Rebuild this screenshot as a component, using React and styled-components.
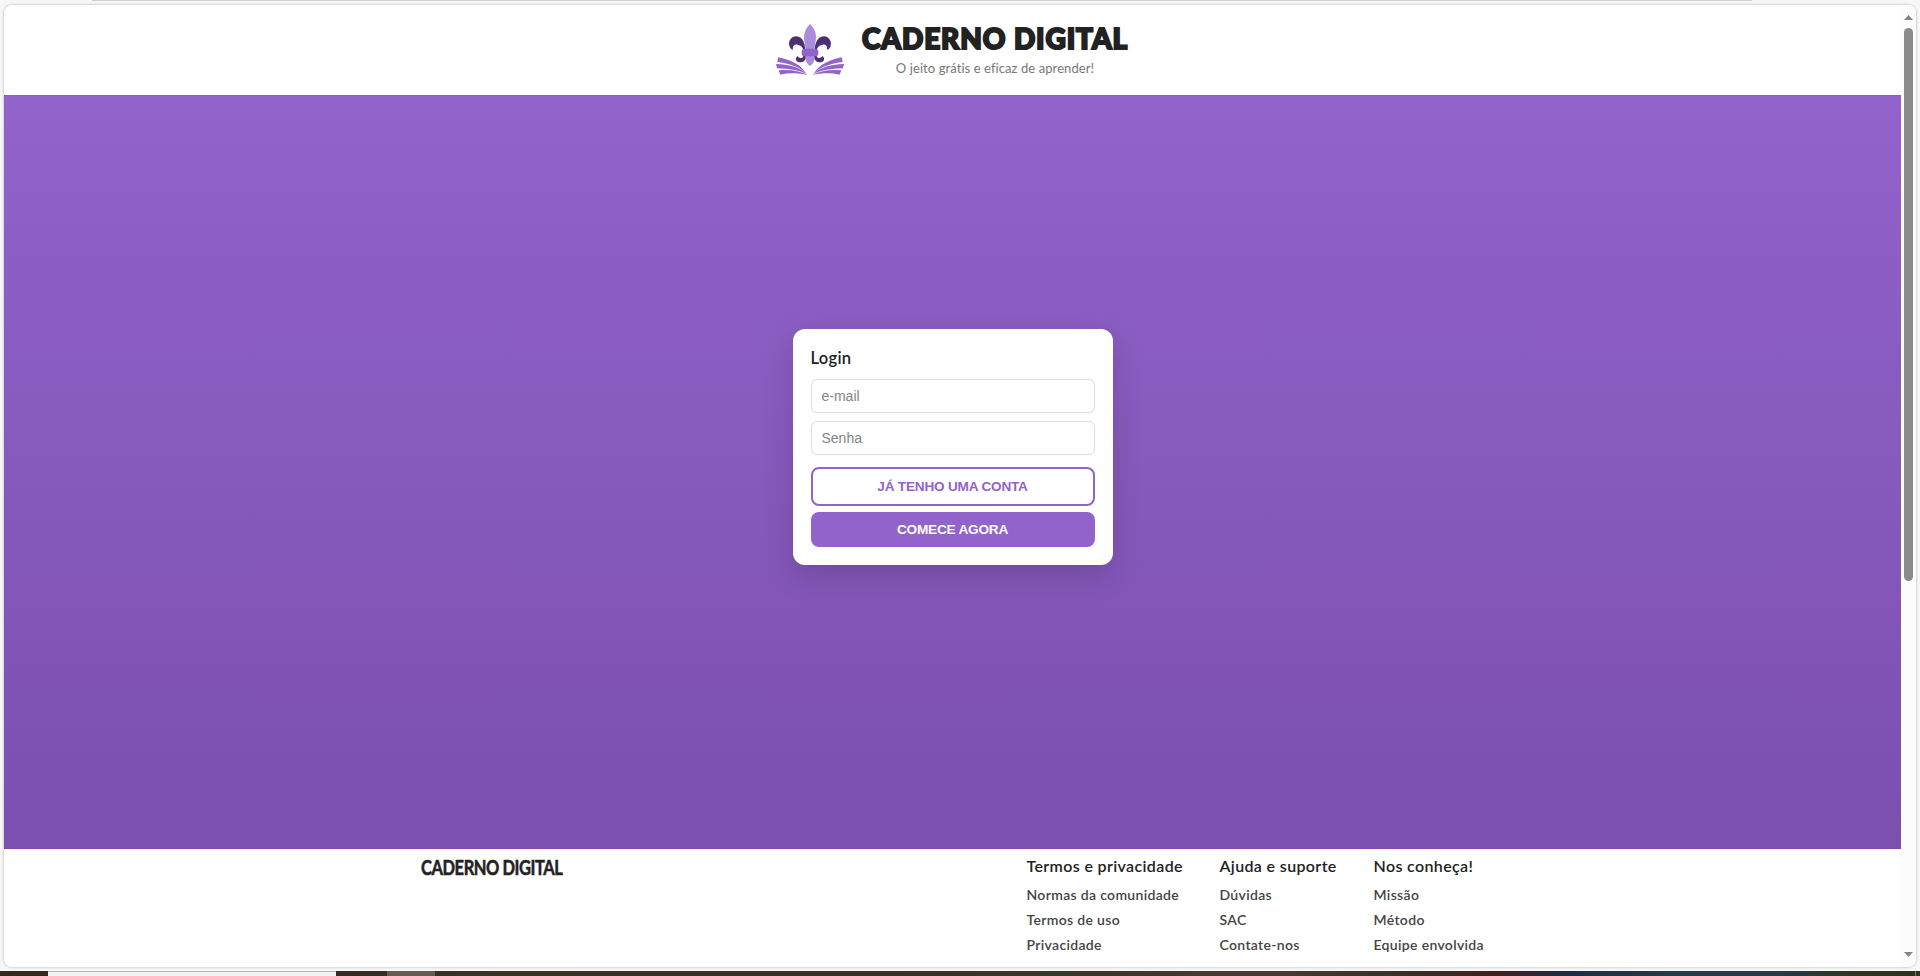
import React from "react";
import styled, { createGlobalStyle } from "styled-components";

const GlobalStyle = createGlobalStyle`
  *, *::before, *::after { box-sizing: border-box; }
  body { margin: 0; background: #f7f7f7; color: #222; font-family: Lato, "Liberation Sans", sans-serif; overflow: hidden; }
  h1, h2, h3, p, ul { margin: 0; padding: 0; }
`;

const Desktop = styled.div`
  display: flex;
  flex-direction: column;
  width: 1920px;
  height: 976px;
`;

const TopEdge = styled.div`
  flex: 0 0 5px;
  padding: 0 168px 0 92px;
  &::before { content: ""; display: block; height: 1px; background: #cfcfcf; }
`;

const Frame = styled.div`
  display: flex;
  flex: 0 0 962px;
  margin: 0 4px;
  border-radius: 8px;
  background: #fff;
  overflow: hidden;
  box-shadow: 0 0 2px 1px rgba(0, 0, 0, 0.14);
`;

const Page = styled.div`
  display: flex;
  flex-direction: column;
  flex: 1;
`;

const Header = styled.header`
  display: flex;
  justify-content: center;
  gap: 17px;
  height: 90px;
  padding: 17px 2px 0 0;
`;

const Brand = styled.div`
  display: flex;
  flex-direction: column;
  align-items: center;
  width: 266px;
`;

const Title = styled.h1`
  margin-top: -1px;
  font-size: 28px;
  font-weight: 900;
  line-height: 34px;
  white-space: nowrap;
  letter-spacing: ${(p) => p.$spacing};
  -webkit-text-stroke: 2px #222;
  stroke-linejoin: round;
`;

const Tagline = styled.p`
  margin-top: 4px;
  font-size: 13px;
  line-height: 18px;
  color: #777;
  white-space: nowrap;
  letter-spacing: ${(p) => p.$spacing};
`;

const Hero = styled.main`
  display: flex;
  align-items: center;
  justify-content: center;
  height: 754px;
  padding-bottom: 50px;
  border-top: 1px solid #8660ba;
  border-bottom: 1px solid #8a44ab;
  background: linear-gradient(180deg, #9163cb, #7b4fae);
`;

const Card = styled.form`
  display: flex;
  flex-direction: column;
  width: 320px;
  height: 236px;
  padding: 18px;
  border-radius: 12px;
  background: #fff;
  box-shadow: 0 10px 30px rgba(0, 0, 0, 0.15);
`;

const CardTitle = styled.h2`
  height: 32px;
  font-size: 16.5px;
  line-height: 22px;
  font-weight: 600;
  letter-spacing: ${(p) => p.$spacing};
`;

const Field = styled.input`
  flex: 0 0 34px;
  width: 100%;
  margin-bottom: 8px;
  padding: 0 10px;
  border: 1px solid #ddd;
  border-radius: 6px;
  background: #fff;
  font: 14px "Liberation Sans", sans-serif;
  &::placeholder { color: #858585; }
`;

const Button = styled.button`
  flex: 0 0 ${(p) => (p.$filled ? 35 : 39)}px;
  margin-top: ${(p) => (p.$filled ? 6 : 4)}px;
  padding: 0;
  border: ${(p) => (p.$filled ? "0" : "2px solid #9163cb")};
  border-radius: 8px;
  background: ${(p) => (p.$filled ? "#9163cb" : "#fff")};
  color: ${(p) => (p.$filled ? "#fff" : "#9163cb")};
  font: 700 13.6px "Liberation Sans", sans-serif;
  letter-spacing: ${(p) => p.$spacing};
`;

const Footer = styled.footer`
  display: flex;
  flex: 1;
  padding: 7px 0 0 417px;
`;

const FooterBrand = styled.div`
  width: 605.5px;
  font-size: 18.5px;
  line-height: 22px;
  font-weight: 700;
  letter-spacing: ${(p) => p.$spacing};
  -webkit-text-stroke: 0.5px #222;
  stroke-linejoin: round;
  transform: scale(0.892, 1.08);
  transform-origin: left top;
`;

const LinkGroup = styled.section`
  width: ${(p) => p.$width}px;
  white-space: nowrap;
`;

const GroupTitle = styled.h3`
  font-size: 16px;
  line-height: 20px;
  font-weight: 600;
  letter-spacing: ${(p) => p.$spacing};
`;

const Links = styled.ul`
  display: grid;
  grid-auto-rows: 25px;
  margin-top: 6px;
  list-style: none;
`;

const FooterLink = styled.li`
  color: #444;
  font-size: 14px;
  line-height: 25px;
  font-weight: 600;
  letter-spacing: ${(p) => p.$spacing};
`;

const Scrollbar = styled.div`
  display: flex;
  flex-direction: column;
  align-items: center;
  flex: 0 0 15px;
  padding: 10px 0;
  background: #fcfcfc;
`;

const Thumb = styled.div`
  width: 9px;
  height: 553px;
  margin: 8px 0 auto;
  border-radius: 5px;
  background: #8b8b8b;
`;

const Arrow = styled.svg`
  display: block;
  width: 9px;
  height: 5px;
  fill: #858585;
  transform: ${(p) => (p.$down ? "rotate(180deg)" : "none")};
`;

const Taskbar = styled.div`
  display: flex;
  flex: 0 0 5px;
  margin-top: 4px;
  background: linear-gradient(90deg, #35291f 0, #35291f 48px, #332b22 340px, #383426 500px, #383529 1070px, #4b3a34 1260px, #383429 1380px, #421f20 1500px, #1e2b42 1565px, #263c4a 1680px, #273940 1790px, #343221 1860px, #302f20 1920px);
`;

const TaskItem = styled.div`
  width: ${(p) => p.$width}px;
  margin-left: ${(p) => p.$gap}px;
  background: ${(p) => p.$color};
  border-top: ${(p) => (p.$outlined ? "1px solid #b8b8b8" : "0")};
`;

function LogoMark() {
  return (
    <svg width="70" height="55" viewBox="45 36 210 165" aria-hidden="true">
      <g fill="#4d2f73">
        <path d="M136 121C135 99 128 80 109 79C91 79 83 98 89 110C92 117 97 119 99 119C97 107 104 103 112 104C123 105 129 113 130 121Z" />
        <path d="M164 121C165 99 172 80 191 79C209 79 217 98 211 110C208 117 203 119 201 119C203 107 196 103 188 104C177 105 171 113 170 121Z" />
        <path d="M130 135C131 145 121 148 112 138C103 148 109 158 122 157C132 156 138 148 139 137Z" />
        <path d="M170 135C169 145 179 148 188 138C197 148 191 158 178 157C168 156 162 148 161 137Z" />
      </g>
      <path fill="#aa8bdc" d="M150 42C138 54 132 67 132 80C132 96 137 105 136 119V138C136 152 140 162 150 168C160 162 164 152 164 138V119C163 105 168 96 168 80C168 67 162 54 150 42Z" />
      <rect x="125" y="116" width="50" height="23" rx="9" fill="#9163cb" />
      <g fill="#9163cb">
        <path d="M55 142C90 149 121 163 137 188C114 169 84 160 52 156Z" />
        <path d="M48 162C86 163 119 171 142 193C115 180 87 176 51 175Z" />
        <path d="M56 181C88 178 117 181 143 195C113 189 88 188 61 194Z" />
        <path d="M245 142C210 149 179 163 163 188C186 169 216 160 248 156Z" />
        <path d="M252 162C214 163 181 171 158 193C185 180 213 176 249 175Z" />
        <path d="M244 181C212 178 183 181 157 195C187 189 212 188 239 194Z" />
      </g>
    </svg>
  );
}

const groups = [
  { title: "Termos e privacidade", width: 193, links: ["Normas da comunidade", "Termos de uso", "Privacidade"] },
  { title: "Ajuda e suporte", width: 154, links: ["Dúvidas", "SAC", "Contate-nos"] },
  { title: "Nos conheça!", width: 130, links: ["Missão", "Método", "Equipe envolvida"] },
];

export default function App() {
  return (
    <Desktop>
      <GlobalStyle />
      <TopEdge />
      <Frame>
        <Page>
          <Header>
            <LogoMark />
            <Brand>
              <Title $spacing="0.9px">CADERNO DIGITAL</Title>
              <Tagline $spacing="0.08px">O jeito grátis e eficaz de aprender!</Tagline>
            </Brand>
          </Header>
          <Hero>
            <Card>
              <CardTitle $spacing="0.3px">Login</CardTitle>
              <Field placeholder="e-mail" type="email" />
              <Field placeholder="Senha" type="password" />
              <Button type="button" $spacing="-0.2px">JÁ TENHO UMA CONTA</Button>
              <Button type="button" $filled $spacing="-0.2px">COMECE AGORA</Button>
            </Card>
          </Hero>
          <Footer>
            <FooterBrand $spacing="-0.5px">CADERNO DIGITAL</FooterBrand>
            {groups.map((g) => (
              <LinkGroup key={g.title} $width={g.width}>
                <GroupTitle $spacing="0.36px">{g.title}</GroupTitle>
                <Links>
                  {g.links.map((l) => (
                    <FooterLink key={l} $spacing="0.33px">{l}</FooterLink>
                  ))}
                </Links>
              </LinkGroup>
            ))}
          </Footer>
        </Page>
        <Scrollbar>
          <Arrow viewBox="0 0 9 5"><path d="M4.5 0L9 5H0Z" /></Arrow>
          <Thumb />
          <Arrow $down viewBox="0 0 9 5"><path d="M4.5 0L9 5H0Z" /></Arrow>
        </Scrollbar>
      </Frame>
      <Taskbar>
        <TaskItem $gap={48} $width={288} $color="#f2f2f2" $outlined />
        <TaskItem $gap={51} $width={48} $color="#655d55" />
        <TaskItem $gap={1480} $width={1} $color="#77776c" />
      </Taskbar>
    </Desktop>
  );
}
